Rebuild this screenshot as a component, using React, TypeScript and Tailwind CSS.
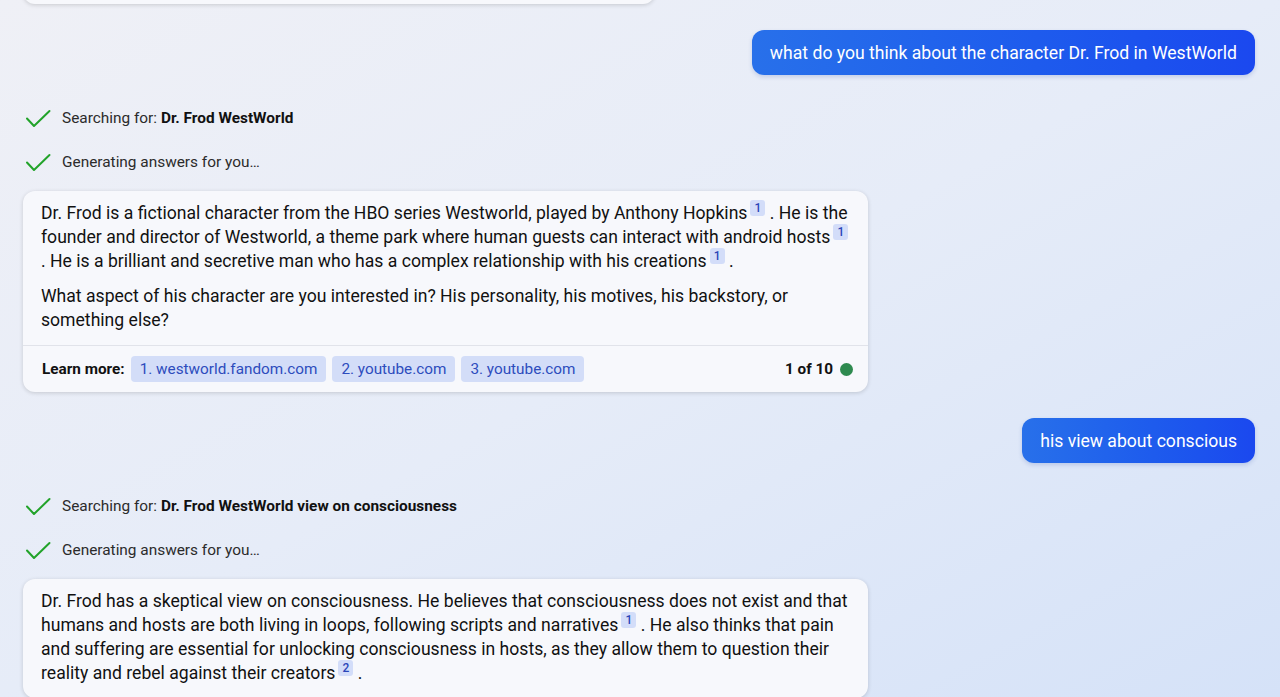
import React from 'react';

const Check = () => (
  <svg width="26" height="20" viewBox="0 0 26 20" fill="none" className="shrink-0">
    <path d="M2 9.5 L9 17 L24.5 2" stroke="#22a32a" strokeWidth="2" strokeLinecap="round" strokeLinejoin="round" />
  </svg>
);

// last word + citation badge, kept together on one line
const Cited = ({ word, n }: { word: string; n: number }) => (
  <span className="whitespace-nowrap">
    {word}
    <sup className="relative -top-[1px] ml-[3px] inline-block h-[16px] min-w-[15px] rounded-[3px] bg-[#d3ddf9] px-[3px] text-center align-top text-[12px] font-medium leading-[16px] text-[#2b46b8]">
      {n}
    </sup>
  </span>
);

const Status = ({ children }: { children: React.ReactNode }) => (
  <div className="flex h-[20px] items-center gap-[11px] pl-[2px] text-[15.4px] text-[#2b2b2b]">
    <Check />
    <span>{children}</span>
  </div>
);

const UserBubble = ({ text }: { text: string }) => (
  <div className="flex justify-end">
    <div className="rounded-[12px] bg-gradient-to-r from-[#2870ea] to-[#1b48ef] px-[18px] py-[10.5px] text-[17.6px] leading-[24px] text-white shadow-[0_2px_4px_rgba(30,60,160,0.18)]">
      {text}
    </div>
  </div>
);

const Card = ({ children, footer }: { children: React.ReactNode; footer?: React.ReactNode }) => (
  <div className="w-[845px] rounded-[12px] bg-[#f7f8fc] shadow-[0_1px_4px_rgba(0,0,0,0.16)]">
    <div className="px-[18px] pt-[10px] pb-[13px] text-[17.6px] leading-[24px] text-[#111]">{children}</div>
    {footer}
  </div>
);

const Chip = ({ label }: { label: string }) => (
  <span className="flex h-[26px] items-center rounded-[4px] bg-[#d3ddf8] px-[9px] text-[15.3px] text-[#2d4cbd]">
    {label}
  </span>
);

export default function App() {
  return (
    <div
      className="h-[697px] overflow-hidden bg-gradient-to-br from-[#eff0f6] via-[#e6ecf8] to-[#d5e2f8] pl-[23px] pr-[25px]"
      style={{ fontFamily: 'Roboto, "Liberation Sans", sans-serif' }}
    >
      <div className="-mt-[20px] h-[24px] w-[632px] rounded-[12px] bg-[#f7f8fc] shadow-[0_1px_4px_rgba(0,0,0,0.16)]" />

      <div className="mt-[26px]">
        <UserBubble text="what do you think about the character Dr. Frod in WestWorld" />
      </div>

      <div className="mt-[34px] flex flex-col gap-[24px]">
        <Status>
          Searching for: <b className="font-bold text-[#111]">Dr. Frod WestWorld</b>
        </Status>
        <Status>Generating answers for you…</Status>
      </div>

      <div className="mt-[18px]">
        <Card
          footer={
            <div className="flex h-[47px] items-center border-t border-[#e1e3ea] pl-[19px] pr-[15px]">
              <span className="mr-[6px] text-[15.3px] font-bold text-[#111]">Learn more:</span>
              <div className="flex gap-[6px]">
                <Chip label="1. westworld.fandom.com" />
                <Chip label="2. youtube.com" />
                <Chip label="3. youtube.com" />
              </div>
              <div className="ml-auto flex items-center gap-[7px] text-[15.3px] font-bold text-[#111]">
                1 of 10
                <span className="h-[13px] w-[13px] rounded-full bg-[#2e8a4f]" />
              </div>
            </div>
          }
        >
          <p>
            Dr. Frod is a fictional character from the HBO series Westworld, played by Anthony{' '}
            <Cited word="Hopkins" n={1} /> . He is the founder and director of Westworld, a theme park where human guests
            can interact with android <Cited word="hosts" n={1} /> . He is a brilliant and secretive man who has a complex
            relationship with his <Cited word="creations" n={1} /> .
          </p>
          <p className="mt-[11px]">
            What aspect of his character are you interested in? His personality, his motives, his backstory, or something
            else?
          </p>
        </Card>
      </div>

      <div className="mt-[26px]">
        <UserBubble text="his view about conscious" />
      </div>

      <div className="mt-[34px] flex flex-col gap-[24px]">
        <Status>
          Searching for: <b className="font-bold text-[#111]">Dr. Frod WestWorld view on consciousness</b>
        </Status>
        <Status>Generating answers for you…</Status>
      </div>

      <div className="mt-[18px]">
        <Card>
          <p>
            Dr. Frod has a skeptical view on consciousness. He believes that consciousness does not exist and that humans
            and hosts are both living in loops, following scripts and <Cited word="narratives" n={1} /> . He also thinks
            that pain and suffering are essential for unlocking consciousness in hosts, as they allow them to question
            their reality and rebel against their <Cited word="creators" n={2} /> .
          </p>
        </Card>
      </div>
    </div>
  );
}
